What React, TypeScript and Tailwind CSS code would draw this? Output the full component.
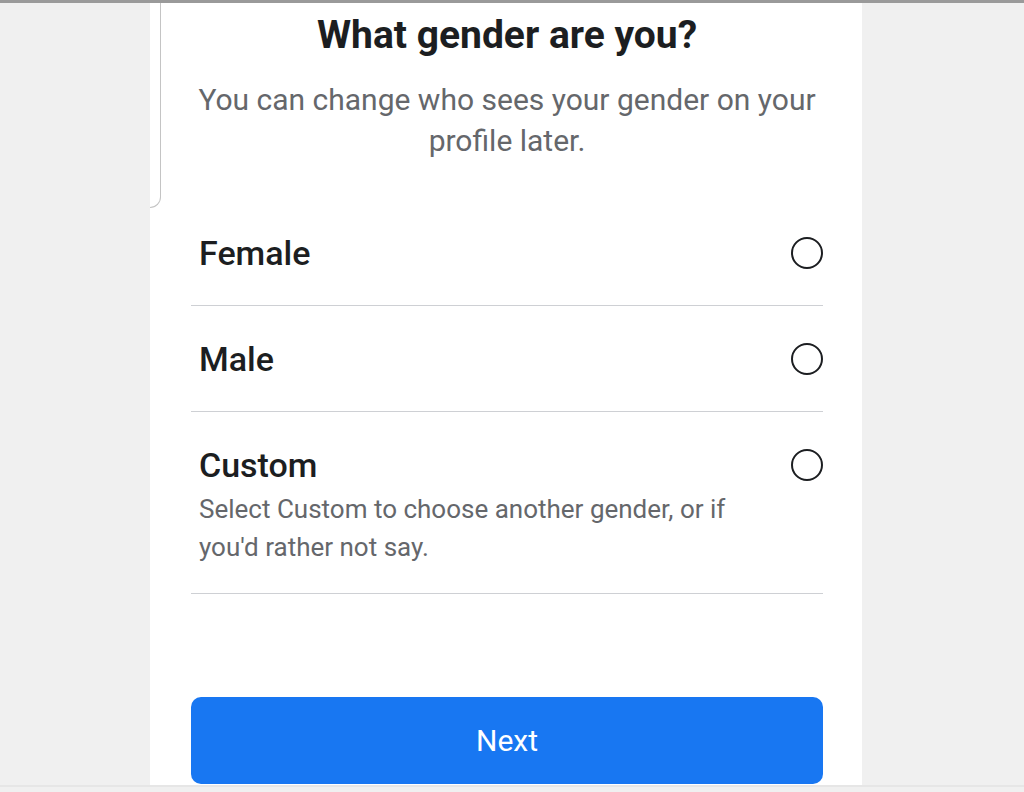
export default function App() {
  const options = [
    { label: 'Female' },
    { label: 'Male' },
    { label: 'Custom', hint: "Select Custom to choose another gender, or if you'd rather not say." },
  ];

  return (
    <div className="w-full h-[792px] bg-[#f0f0f0] border-t-[3px] border-[#9a9a9a] flex flex-col overflow-hidden font-['Roboto',sans-serif]">
      <div className="ml-[150px] w-[712px] h-[782px] bg-white relative pl-[41px] pr-[39px]">
        {/* leftover edge of the panel behind */}
        <div className="absolute left-0 top-0 w-[11px] h-[205px] border-r border-b border-[#c4c4c4] rounded-br-[12px]" />

        <h1 className="pt-[10px] text-center text-[39px] leading-[44px] font-bold text-[#1c1e21]">
          What gender are you?
        </h1>
        <p className="mt-[22px] text-center text-[30px] leading-[41px] text-[#65676b]">
          You can change who sees your gender on your profile later.
        </p>

        <ul className="mt-[39px]">
          {options.map(o => (
            <li key={o.label} className="flex items-start justify-between border-b border-[#ced0d4] pt-[33px] pb-[32px] pl-[8px] last:pb-[27px]">
              <div className="flex-1">
                <div className="text-[34px] leading-[40px] font-medium text-[#1c1e21]">{o.label}</div>
                {o.hint && (
                  <div className="mt-[5px] w-[560px] text-[26px] leading-[38px] text-[#65676b]">{o.hint}</div>
                )}
              </div>
              <span className="mt-[4px] w-[32px] h-[32px] rounded-full border-[2.5px] border-[#1c1e21] shrink-0" />
            </li>
          ))}
        </ul>

        <button className="mt-[103px] w-full h-[87px] rounded-[10px] bg-[#1877f2] text-white text-[30px] leading-[36px]">
          Next
        </button>
      </div>
      <div className="flex-1 border-t-2 border-[#e6e6e6]" />
    </div>
  );
}
